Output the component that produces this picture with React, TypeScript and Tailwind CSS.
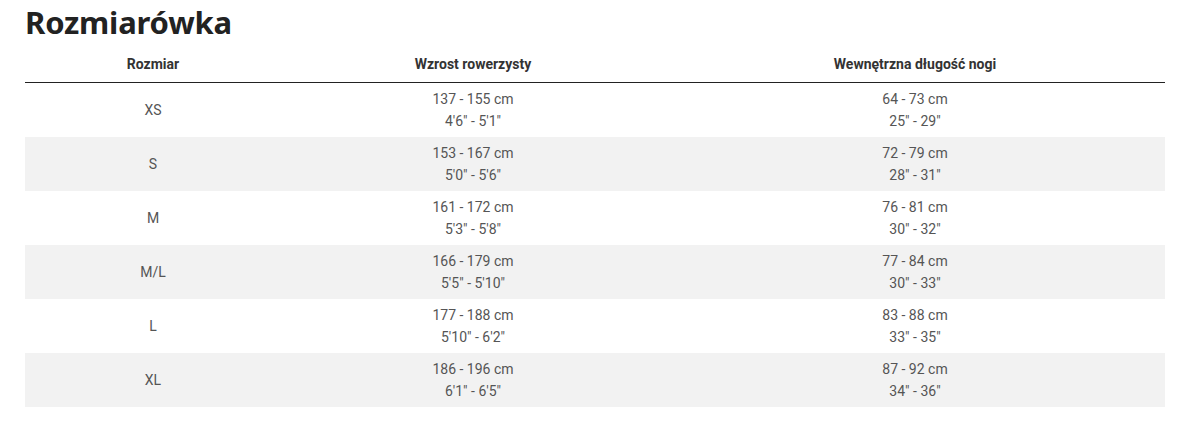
const rows = [
  { size: "XS", height: ["137 - 155 cm", "4'6\" - 5'1\""], leg: ["64 - 73 cm", "25\" - 29\""] },
  { size: "S", height: ["153 - 167 cm", "5'0\" - 5'6\""], leg: ["72 - 79 cm", "28\" - 31\""] },
  { size: "M", height: ["161 - 172 cm", "5'3\" - 5'8\""], leg: ["76 - 81 cm", "30\" - 32\""] },
  { size: "M/L", height: ["166 - 179 cm", "5'5\" - 5'10\""], leg: ["77 - 84 cm", "30\" - 33\""] },
  { size: "L", height: ["177 - 188 cm", "5'10\" - 6'2\""], leg: ["83 - 88 cm", "33\" - 35\""] },
  { size: "XL", height: ["186 - 196 cm", "6'1\" - 6'5\""], leg: ["87 - 92 cm", "34\" - 36\""] },
];

const Cell = ({ lines }: { lines: string[] }) => (
  <div className="flex flex-col items-center justify-center leading-[22px]">
    {lines.map((l) => (
      <span key={l}>{l}</span>
    ))}
  </div>
);

export default function App() {
  return (
    <div className="bg-white w-[1184px] h-[426px] px-[25px] pt-[2px] font-['Roboto',sans-serif] text-[#333]">
      <h1 className="font-['Noto_Sans',sans-serif] font-bold text-[31px] leading-[40px] tracking-[-0.2px] text-[#222]">
        Rozmiarówka
      </h1>
      <div className="w-[1140px] mt-[4px]">
        <div className="grid grid-cols-[256px_384px_500px] h-[37px] items-center border-b border-[#222] text-[14px] font-bold">
          <div className="text-center">Rozmiar</div>
          <div className="text-center">Wzrost rowerzysty</div>
          <div className="text-center">Wewnętrzna długość nogi</div>
        </div>
        {rows.map((r, i) => (
          <div
            key={r.size}
            className={`grid grid-cols-[256px_384px_500px] h-[54px] items-center text-[14px] text-[#555] ${i % 2 === 1 ? "bg-[#f2f2f2]" : ""}`}
          >
            <div className="text-center">{r.size}</div>
            <Cell lines={r.height} />
            <Cell lines={r.leg} />
          </div>
        ))}
      </div>
    </div>
  );
}
